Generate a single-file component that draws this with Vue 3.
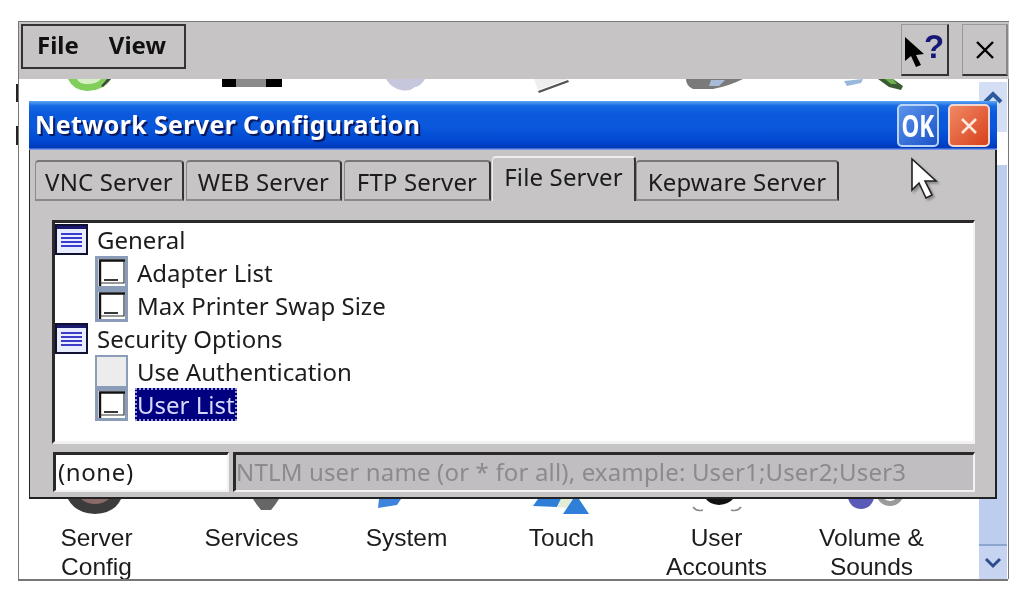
<script setup>
const tabs = [
  { label: 'VNC Server', w: 149 },
  { label: 'WEB Server', w: 156 },
  { label: 'FTP Server', w: 147 },
  { label: 'File Server', w: 144, active: true },
  { label: 'Kepware Server', w: 203 }
]

const rows = [
  { label: 'General', type: 'group' },
  { label: 'Adapter List', type: 'item' },
  { label: 'Max Printer Swap Size', type: 'item' },
  { label: 'Security Options', type: 'group' },
  { label: 'Use Authentication', type: 'blank' },
  { label: 'User List', type: 'item', selected: true }
]

const apps = [
  ['Server', 'Config'],
  ['Services'],
  ['System'],
  ['Touch'],
  ['User', 'Accounts'],
  ['Volume &', 'Sounds']
]
</script>

<template>
  <div class="screen">
    <div class="frame">
      <div class="menubar">
        <div class="menu">
          <span>File</span>
          <span>View</span>
        </div>
        <div class="spacer"></div>
        <button class="tool help">
          <svg class="help-arrow" width="19" height="30" viewBox="0 0 19 30">
            <path d="M0 0 L0 24 L6 19 L11 30 L16 28 L11 18 L19 17 Z" fill="#000"></path>
          </svg>
          <span class="qmark">?</span>
        </button>
        <button class="tool shut">
          <svg width="20" height="20" viewBox="0 0 20 20">
            <path d="M2 2 L18 18 M18 2 L2 18" stroke="#000" stroke-width="2.4" fill="none"></path>
          </svg>
        </button>
      </div>

      <div class="desktop">
        <svg class="icons" width="960" height="502" viewBox="18 79 960 502">
          <!-- tops of the icons that stick out above the dialog -->
          <path d="M67 79 H110 Q104 90 86 91 Q72 90 67 79 Z" fill="#7fcf5a"></path>
          <path d="M76 79 H100 Q96 84 86 84 Q78 84 76 79 Z" fill="#d8f0c8"></path>
          <path d="M102 87 L110 79 H106 L100 86 Z" fill="#444"></path>
          <rect x="221" y="79" width="60" height="8" fill="#8a8a8a"></rect>
          <rect x="221" y="79" width="14" height="8" fill="#000"></rect>
          <rect x="265" y="79" width="16" height="8" fill="#000"></rect>
          <path d="M385 79 H424 Q420 86 414 87 Q408 92 400 90 Q390 88 385 79 Z" fill="#c6c6dc"></path>
          <path d="M533 79 H567 L537 90 Z" fill="#eeeeee"></path>
          <path d="M537 91 L567 80 L568 82 L538 93 Z" fill="#555"></path>
          <path d="M685 79 H742 Q728 86 712 89 H692 Q685 86 685 79 Z" fill="#7a7a7a"></path>
          <path d="M710 80 H724 L718 86 H708 Z" fill="#a8bcd8"></path>
          <path d="M843 81 L862 79 L860 83 L846 86 Z" fill="#9ab8dc"></path>
          <path d="M877 79 H892 L902 86 L900 90 L888 87 Z" fill="#3c5a34"></path>
          <path d="M884 79 H892 L896 84 L890 84 Z" fill="#6ab04c"></path>

          <!-- bottoms of the icons below the dialog -->
          <path d="M67 499 H120 Q114 513 94 514 Q74 513 67 499 Z" fill="#3c3c3c"></path>
          <path d="M80 499 H108 Q102 504 94 504 Q86 504 80 499 Z" fill="#8a6a6a"></path>
          <path d="M252 499 H278 L274 505 L270 510 H260 L256 505 Z" fill="#666"></path>
          <path d="M378 499 H400 L396 505 L377 508 Z" fill="#3f84dc"></path>
          <path d="M537 499 L560 499 L556 507 L532 506 Z" fill="#2f7fd8"></path>
          <path d="M560 499 H572 L566 508 L556 507 Z" fill="#e4ecd8"></path>
          <path d="M572 499 H578 L588 514 H562 Z" fill="#2f7fd8"></path>
          <path d="M705 499 H732 Q728 504 718 505 Q708 504 705 499 Z" fill="#111"></path>
          <path d="M692 507 Q696 512 702 510 M740 507 Q736 512 730 510" stroke="#888" stroke-width="1.5" fill="none"></path>
          <circle cx="860" cy="496" r="13" fill="#5a5ab8"></circle>
          <circle cx="889" cy="492" r="14" fill="#9a9a9a"></circle>
          <circle cx="889" cy="492" r="9" fill="#fff"></circle>
        </svg>

        <div class="desk-main">
          <div class="app-grid">
            <div v-for="app in apps" :key="app[0]" class="app">
              <div v-for="line in app" :key="line">{{ line }}</div>
            </div>
          </div>
        </div>

        <div class="scrollbar">
          <div class="scroll-btn up">
            <svg width="22" height="14" viewBox="0 0 22 14">
              <path d="M3 12 L11 4 L19 12" stroke="#2d5a9c" stroke-width="4" fill="none"></path>
            </svg>
          </div>
          <div class="scroll-gap"></div>
          <div class="scroll-track"></div>
          <div class="scroll-btn down">
            <svg width="18" height="12" viewBox="0 0 18 12">
              <path d="M2 2 L9 9 L16 2" stroke="#2d4d8c" stroke-width="3" fill="none"></path>
            </svg>
          </div>
        </div>

        <div class="dialog">
          <div class="titlebar">
            <span class="title">Network Server Configuration</span>
            <div class="title-btns">
              <button class="cap ok"><span>OK</span></button>
              <button class="cap cross">
                <svg width="20" height="20" viewBox="0 0 20 20">
                  <path d="M3 3 L17 17 M17 3 L3 17" stroke="#ffe8dc" stroke-width="2.6" fill="none"></path>
                </svg>
              </button>
            </div>
          </div>

          <div class="client">
            <div class="tabs">
              <div
                v-for="tab in tabs"
                :key="tab.label"
                class="tab"
                :class="{ active: tab.active }"
                :style="{ width: tab.w + 'px' }"
              >{{ tab.label }}</div>
            </div>

            <div class="page">
              <div class="tree">
                <div
                  v-for="row in rows"
                  :key="row.label"
                  class="row"
                  :class="row.type"
                >
                  <svg v-if="row.type === 'group'" class="ico" width="33" height="31" viewBox="0 0 33 31">
                    <rect x="1" y="1" width="31" height="29" fill="#e8ecff" stroke="#101030" stroke-width="2"></rect>
                    <rect x="2" y="2" width="29" height="3" fill="#1a1a70"></rect>
                    <path d="M6 10 H27 M6 14 H27 M6 18 H27 M6 22 H27" stroke="#3c3cc8" stroke-width="2.2"></path>
                  </svg>
                  <svg v-else-if="row.type === 'item'" class="ico" width="33" height="33" viewBox="0 0 33 33">
                    <rect x="0" y="0" width="33" height="33" fill="#8a9cb8"></rect>
                    <rect x="3" y="3" width="27" height="27" fill="#fff"></rect>
                    <path d="M5 30 V4.5 H30" stroke="#111" stroke-width="2.4" fill="none"></path>
                    <path d="M29 5 V27 H5" stroke="#333" stroke-width="1.2" fill="none"></path>
                    <path d="M9 24 H23" stroke="#222" stroke-width="1.8"></path>
                  </svg>
                  <svg v-else class="ico" width="33" height="33" viewBox="0 0 33 33">
                    <rect x="1" y="1" width="31" height="31" fill="#ececec" stroke="#8a9cb8" stroke-width="2"></rect>
                  </svg>
                  <span class="row-label" :class="{ selected: row.selected }">{{ row.label }}</span>
                </div>
              </div>

              <div class="fields">
                <div class="field value">(none)</div>
                <div class="field hint">NTLM user name (or * for all), example: User1;User2;User3</div>
              </div>
            </div>
          </div>

          <svg class="pointer" width="36" height="44" viewBox="0 0 36 44">
            <path d="M2 2 L2 33 L9 26 L16 41 L22 38 L15 24 L26 24 Z" fill="#fff" stroke="#222" stroke-width="1.6"></path>
          </svg>
        </div>

        <span class="tick one"></span>
        <span class="tick two"></span>
      </div>
    </div>
  </div>
</template>

<style scoped>
.screen {
  width: 1027px;
  height: 602px;
  overflow: hidden;
  background: #fff;
  padding: 21px 0 0 18px;
  box-sizing: border-box;
  font-family: "Noto Sans", "Liberation Sans", sans-serif;
  color: #1c1c1c;
  filter: blur(0.45px);
}

.frame {
  width: 990px;
  height: 560px;
  display: flex;
  flex-direction: column;
  border-left: 1px solid #777;
  box-sizing: border-box;
  border-bottom: 2px solid #777;
}

.menubar {
  height: 58px;
  flex: none;
  display: flex;
  align-items: flex-start;
  background: #c6c4c5;
  border-top: 1px solid #777;
  padding: 2px 0 0 2px;
  box-sizing: border-box;
  margin-right: -1px;
}

.menu {
  width: 165px;
  height: 45px;
  box-sizing: border-box;
  border: 2px solid #333;
  display: flex;
  align-items: center;
  gap: 30px;
  padding: 0 0 4px 14px;
  font-weight: 700;
  font-size: 24px;
  color: #111;
}

.spacer {
  flex: 1;
}

.tool {
  height: 52px;
  box-sizing: border-box;
  background: #c6c4c5;
  border: 1px solid #999;
  border-right: 2px solid #333;
  border-bottom: 2px solid #333;
  padding: 0;
  display: flex;
  align-items: center;
  justify-content: center;
}

.help {
  width: 48px;
  margin-right: 13px;
  gap: 0;
}

.shut {
  width: 46px;
  margin-right: 1px;
  border-right-color: #888;
}

.help-arrow {
  margin-top: 4px;
}

.qmark {
  font-family: "Liberation Sans", sans-serif;
  font-weight: 700;
  font-size: 33px;
  line-height: 1;
  color: #17177a;
  margin-top: -6px;
}

.desktop {
  flex: 1;
  display: flex;
  position: relative;
  min-height: 0;
  background: #fff;
  border-right: 1px solid #777;
  margin-right: -1px;
}

.icons {
  position: absolute;
  left: 0;
  top: 0;
}

.desk-main {
  flex: 1;
  display: flex;
  flex-direction: column;
  justify-content: flex-end;
  overflow: hidden;
  position: relative;
}

.app-grid {
  display: grid;
  grid-template-columns: repeat(6, 155px);
  height: 56px;
  flex: none;
  font-family: "Liberation Sans", sans-serif;
  font-size: 24.5px;
  line-height: 29px;
}

.app {
  text-align: center;
  white-space: nowrap;
}

.scrollbar {
  width: 30px;
  flex: none;
  display: flex;
  flex-direction: column;
  background: #fff;
  padding: 3px 1px 0 1px;
  box-sizing: border-box;
}

.scroll-btn {
  display: flex;
  justify-content: center;
  flex: none;
}

.scroll-btn.up {
  height: 50px;
  background: #d4dff5;
  padding-top: 8px;
  box-sizing: border-box;
}

.scroll-gap {
  height: 33px;
  flex: none;
}

.scroll-track {
  flex: 1;
  background: #bccdee;
}

.scroll-btn.down {
  height: 35px;
  background: #c6d4f2;
  border-top: 2px solid #8ca4d0;
  box-sizing: border-box;
  align-items: center;
}

.dialog {
  position: absolute;
  left: 10px;
  top: 22px;
  width: 968px;
  height: 398px;
  display: flex;
  flex-direction: column;
}

.titlebar {
  height: 49px;
  flex: none;
  display: flex;
  align-items: center;
  justify-content: space-between;
  padding: 0 7px 0 7px;
  box-sizing: border-box;
  background: linear-gradient(to bottom, #5ea4f0 0, #1668e4 5px, #0a58dc 14px, #0a58dc 26px, #0048d0 40px, #0038b8 47px, #7a98e8 48px);
}

.title {
  color: #fff;
  font-weight: 700;
  font-size: 25px;
  letter-spacing: 0.33px;
  text-shadow: 2px 2px 0 #0b1a60;
  white-space: nowrap;
  margin-left: -1px;
  margin-top: -3px;
}

.title-btns {
  display: flex;
  gap: 9px;
  align-items: center;
}

.cap {
  width: 42px;
  height: 43px;
  box-sizing: border-box;
  border: 2px solid #b8d4f8;
  border-radius: 5px;
  padding: 0;
  display: flex;
  align-items: center;
  justify-content: center;
}

.ok {
  background: linear-gradient(135deg, #5a94ec, #1c54c8);
  color: #fff;
  font-family: "Noto Sans", sans-serif;
  font-weight: 700;
  font-size: 30px;
  line-height: 1;
}

.ok span {
  display: block;
  transform: scaleX(0.75);
}

.cross {
  background: linear-gradient(135deg, #f08a64, #d8401c);
  border-color: #f0d8d0;
}

.client {
  flex: 1;
  min-height: 0;
  background: #c6c4c5;
  border: solid #222;
  border-width: 0 2px 2px 1px;
  display: flex;
  flex-direction: column;
  box-sizing: border-box;
}

.tabs {
  height: 51px;
  flex: none;
  display: flex;
  align-items: flex-end;
  padding-left: 5px;
  box-sizing: border-box;
  font-size: 24px;
  letter-spacing: 0.15px;
  line-height: 1;
}

.tab {
  height: 41px;
  box-sizing: border-box;
  border: 1px solid #8a8a8a;
  border-top: 2px solid #777;
  border-right: 2px solid #333;
  border-bottom: 2px solid #8a8a8a;
  border-radius: 4px 4px 0 0;
  display: flex;
  align-items: center;
  justify-content: center;
  white-space: nowrap;
  background: #c6c4c5;
  margin-right: 2px;
  padding-top: 3px;
}

.tab:nth-child(3),
.tab:nth-child(4) {
  margin-right: 1px;
}

.tab.active {
  height: 45px;
  border-top-color: #eee;
  border-left-color: #eee;
  border-bottom: none;
  margin-right: 0;
  padding-top: 0;
  padding-bottom: 6px;
}

.page {
  flex: 1;
  min-height: 0;
  display: flex;
  flex-direction: column;
  padding: 19px 20px 6px 22px;
  box-sizing: border-box;
}

.tree {
  height: 224px;
  flex: none;
  box-sizing: border-box;
  background: #fff;
  border: solid #f2f2f2;
  border-width: 0 2px 3px 0;
  border-top: 3px solid #2a2a2a;
  border-left: 3px solid #2a2a2a;
  font-size: 24px;
}

.row {
  height: 33px;
  display: flex;
  align-items: center;
  white-space: nowrap;
}

.row.group .ico {
  margin-right: 7px;
}

.row.item,
.row.blank {
  padding-left: 40px;
}

.row.item .ico,
.row.blank .ico {
  margin-right: 7px;
}

.row-label {
  padding: 0 2px;
}

.row-label.selected {
  background: #000080;
  color: #d8d8ff;
  outline: 2px dotted #9a9ad0;
  outline-offset: -2px;
  line-height: 33px;
  height: 33px;
}

.fields {
  display: flex;
  gap: 4px;
  margin-top: 8px;
  margin-left: 1px;
  height: 40px;
  flex: none;
}

.field {
  box-sizing: border-box;
  border: solid #2a2a2a;
  border-width: 3px 0 0 3px;
  border-right: 2px solid #f2f2f2;
  border-bottom: 2px solid #f2f2f2;
  display: flex;
  align-items: center;
  font-size: 24px;
  white-space: nowrap;
  padding: 0 0 3px 2px;
}

.value {
  width: 176px;
  background: #fff;
  letter-spacing: 0.6px;
}

.hint {
  flex: 1;
  background: #c0bec0;
  color: #8c8a8c;
  overflow: hidden;
  padding-left: 0;
  letter-spacing: 0.16px;
}

.pointer {
  position: absolute;
  left: 881px;
  top: 56px;
  filter: drop-shadow(2px 2px 1px #888);
}

.tick {
  position: absolute;
  left: -3px;
  width: 2px;
  background: #222;
}

.tick.one {
  top: 5px;
  height: 18px;
}

.tick.two {
  top: 47px;
  height: 19px;
}
</style>

<style>
html, body {
  margin: 0;
  background: #fff;
}
</style>
